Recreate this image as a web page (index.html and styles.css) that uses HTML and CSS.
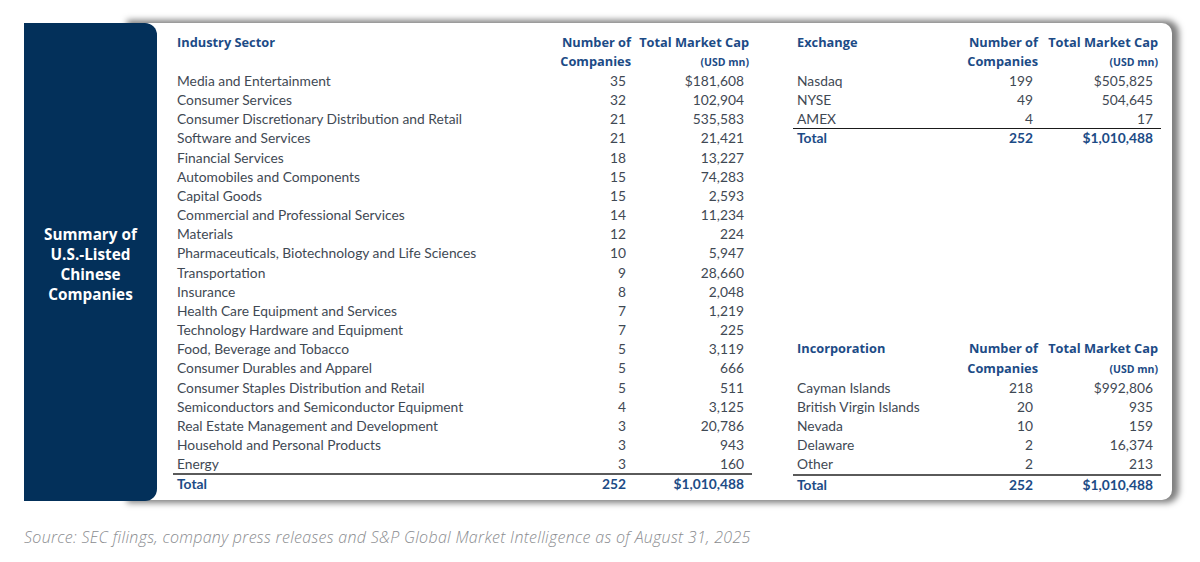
FILE: index.html
```html
<!DOCTYPE html>
<html>
<head>
<meta charset="utf-8">
<link rel="stylesheet" href="styles.css">
</head>
<body>
<div class="wrap">
  <div class="panel"><div class="panel-title">Summary of<br>U.S.-Listed<br>Chinese<br>Companies</div></div>
  <div class="card">
    <div class="tbl tbl-left">
      <div class="hd lbl span2">Industry Sector</div>
      <div class="hd num span2">Number of<br>Companies</div>
      <div class="hd num span2">Total Market Cap<br><span class="unit">(USD mn)</span></div>

      <div class="lbl">Media and Entertainment</div><div class="num">35</div><div class="num">$181,608</div>
      <div class="lbl">Consumer Services</div><div class="num">32</div><div class="num">102,904</div>
      <div class="lbl">Consumer Discretionary Distribution and Retail</div><div class="num">21</div><div class="num">535,583</div>
      <div class="lbl">Software and Services</div><div class="num">21</div><div class="num">21,421</div>
      <div class="lbl">Financial Services</div><div class="num">18</div><div class="num">13,227</div>
      <div class="lbl">Automobiles and Components</div><div class="num">15</div><div class="num">74,283</div>
      <div class="lbl">Capital Goods</div><div class="num">15</div><div class="num">2,593</div>
      <div class="lbl">Commercial and Professional Services</div><div class="num">14</div><div class="num">11,234</div>
      <div class="lbl">Materials</div><div class="num">12</div><div class="num">224</div>
      <div class="lbl">Pharmaceuticals, Biotechnology and Life Sciences</div><div class="num">10</div><div class="num">5,947</div>
      <div class="lbl">Transportation</div><div class="num">9</div><div class="num">28,660</div>
      <div class="lbl">Insurance</div><div class="num">8</div><div class="num">2,048</div>
      <div class="lbl">Health Care Equipment and Services</div><div class="num">7</div><div class="num">1,219</div>
      <div class="lbl">Technology Hardware and Equipment</div><div class="num">7</div><div class="num">225</div>
      <div class="lbl">Food, Beverage and Tobacco</div><div class="num">5</div><div class="num">3,119</div>
      <div class="lbl">Consumer Durables and Apparel</div><div class="num">5</div><div class="num">666</div>
      <div class="lbl">Consumer Staples Distribution and Retail</div><div class="num">5</div><div class="num">511</div>
      <div class="lbl">Semiconductors and Semiconductor Equipment</div><div class="num">4</div><div class="num">3,125</div>
      <div class="lbl">Real Estate Management and Development</div><div class="num">3</div><div class="num">20,786</div>
      <div class="lbl">Household and Personal Products</div><div class="num">3</div><div class="num">943</div>
      <div class="lbl">Energy</div><div class="num">3</div><div class="num">160</div>
      <div class="lbl tot">Total</div><div class="num tot">252</div><div class="num tot">$1,010,488</div>
    </div>

    <div class="right-col">
      <div class="tbl tbl-right">
        <div class="hd lbl span2">Exchange</div>
        <div class="hd num span2">Number of<br>Companies</div>
        <div class="hd num span2">Total Market Cap<br><span class="unit">(USD mn)</span></div>
        <div class="lbl">Nasdaq</div><div class="num">199</div><div class="num">$505,825</div>
        <div class="lbl">NYSE</div><div class="num">49</div><div class="num">504,645</div>
        <div class="lbl">AMEX</div><div class="num">4</div><div class="num">17</div>
        <div class="lbl tot thin">Total</div><div class="num tot thin">252</div><div class="num tot thin">$1,010,488</div>
      </div>

      <div class="tbl tbl-right">
        <div class="hd lbl span2">Incorporation</div>
        <div class="hd num span2">Number of<br>Companies</div>
        <div class="hd num span2">Total Market Cap<br><span class="unit">(USD mn)</span></div>
        <div class="lbl">Cayman Islands</div><div class="num">218</div><div class="num">$992,806</div>
        <div class="lbl">British Virgin Islands</div><div class="num">20</div><div class="num">935</div>
        <div class="lbl">Nevada</div><div class="num">10</div><div class="num">159</div>
        <div class="lbl">Delaware</div><div class="num">2</div><div class="num">16,374</div>
        <div class="lbl">Other</div><div class="num">2</div><div class="num">213</div>
        <div class="lbl tot">Total</div><div class="num tot">252</div><div class="num tot">$1,010,488</div>
      </div>
    </div>
  </div>
</div>
<p class="source">Source: SEC filings, company press releases and S&amp;P Global Market Intelligence as of August 31, 2025</p>
</body>
</html>
```

FILE: styles.css
```css
* { box-sizing: border-box; }
body {
  margin: 0;
  background: #ffffff;
  font-family: Lato, "Open Sans", sans-serif;
  width: 1200px;
  height: 562px;
  overflow: hidden;
}
.wrap {
  display: flex;
  padding: 23px 0 0 24px;
}
.panel {
  position: relative;
  z-index: 2;
  width: 133px;
  height: 478px;
  background: #03305a;
  border-radius: 0 12px 12px 0;
  display: flex;
  align-items: center;
  justify-content: center;
}
.panel-title {
  color: #ffffff;
  font-family: "Open Sans", sans-serif;
  font-weight: 700;
  font-size: 15.3px;
  line-height: 20px;
  text-align: center;
  padding-top: 4px;
}
.card {
  position: relative;
  z-index: 1;
  margin-left: -31px;
  width: 1046px;
  height: 477px;
  background: #ffffff;
  border-radius: 0 10px 10px 0;
  box-shadow: 4px 0 6px 3px rgba(0, 0, 0, 0.5);
  display: flex;
  padding: 9.5px 0 0 47px;
}
.tbl {
  display: grid;
  grid-auto-rows: 19.18px;
  font-size: 13.8px;
  color: #3f4954;
}
.tbl-left {
  grid-template-columns: 382px 79px 118px;
  grid-template-rows: repeat(24, 19.18px);
}
.right-col {
  margin-left: 41px;
  display: flex;
  flex-direction: column;
  justify-content: space-between;
  height: 460.3px;
}
.tbl-right {
  grid-template-columns: 169px 79px 120px;
}
.lbl {
  padding-left: 4px;
  line-height: 19.18px;
  white-space: nowrap;
}
.num {
  text-align: right;
  padding-right: 8px;
  line-height: 19.18px;
  white-space: nowrap;
}
.hd {
  color: #1c4b86;
  font-family: "Open Sans", sans-serif;
  font-weight: 700;
  font-size: 12.8px;
  line-height: 19.18px;
}
.hd.num { padding-right: 3px; }
.span2 { grid-row: span 2; }
.unit { font-size: 10.5px; }
.tot {
  color: #1c4b86;
  font-weight: 700;
  border-top: 2px solid #5a5a5a;
  line-height: 17px;
}
.tot.thin {
  border-top: 1.5px solid #1a1a1a;
  line-height: 17.5px;
}
.source {
  margin: 25px 0 0 24px;
  font-family: "Open Sans", sans-serif;
  font-size: 16px;
  letter-spacing: 0.3px;
  font-style: italic;
  font-weight: 300;
  color: #8a8c8f;
}
```
